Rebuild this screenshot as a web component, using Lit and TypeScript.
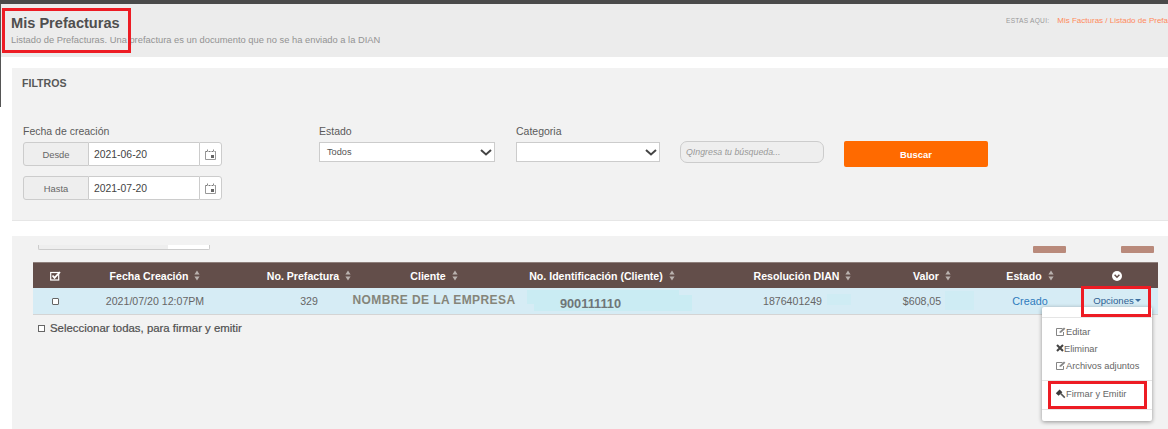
import { LitElement, html, css } from "lit";
import { customElement } from "lit/decorators.js";

const sortIcon = html`<svg class="sort" width="6" height="11" viewBox="0 0 6 11"><path d="M3 0.5 5.6 4.5H0.4Z M3 10.5 0.4 6.5H5.6Z" fill="#b9b1ae"/></svg>`;
const calIcon = html`<svg width="11" height="11" viewBox="0 0 11 11" fill="none" stroke="#777" stroke-width="1"><path d="M0.5 2.5V10.5H10.5V2.5" stroke="#999"/><path d="M0.5 2.5H10.5" stroke-dasharray="2 1"/><path d="M2.5 0.5V2M8.5 0.5V2" stroke="#888"/><rect x="6" y="6" width="3" height="3" fill="#666" stroke="none"/></svg>`;
const chevron = html`<svg width="12" height="7" viewBox="0 0 12 7" fill="none" stroke="#444" stroke-width="2"><path d="M1 1 6 5.5 11 1"/></svg>`;
const editIcon = html`<svg width="10" height="9" viewBox="0 0 10 9" fill="none" stroke="#777" stroke-width="0.9"><path d="M6.5 1.5H0.5V8.5H7.5V5"/><path d="M3.5 6 4 4.2 8 0.5 9.4 1.8 5.4 5.6Z" fill="#888" stroke="none"/></svg>`;
const delIcon = html`<svg width="8" height="8" viewBox="0 0 8 8" fill="none" stroke="#444" stroke-width="2.1"><path d="M1 1 7 7M7 1 1 7"/></svg>`;
const gavelIcon = html`<svg width="11" height="10" viewBox="0 0 11 10"><path d="M0.8 4.2 4.6 0.6 7.4 3.2 3.6 6.8Z" fill="#3a3a3a"/><path d="M5.8 4.6 9.8 8.6" stroke="#555" stroke-width="1.5" fill="none"/></svg>`;

@customElement("app-root")
export class AppRoot extends LitElement {
  static styles = css`
    :host { display: block; width: 1168px; height: 429px; overflow: hidden; position: relative; background: #fff; font-family: "Liberation Sans", Arial, sans-serif; color: #555; }
    .topbar { height: 4px; background: #4a4a4a; }
    .sliver { position: absolute; left: 0; top: 4px; width: 1px; height: 103px; background: #555; }
    .head { height: 53px; box-sizing: border-box; background: #ececec; padding: 11px 0 0 11px; display: flex; justify-content: space-between; }
    h1 { margin: 0; font-size: 14.6px; line-height: 17px; font-weight: 700; color: #4f4f4f; }
    .sub { margin-top: 2px; font-size: 9.35px; line-height: 12px; color: #939393; }
    .crumb { display: flex; white-space: nowrap; font-size: 8px; line-height: 10px; width: 162px; overflow: hidden; padding-top: 1px; flex: none; height: 12px; }
    .crumb b { font-size: 6.6px; font-weight: 400; color: #999; letter-spacing: 0.25px; margin-right: 8px; }
    .crumb span { color: #ff8a5c; }
    .filters { margin: 11px 0 0 12px; height: 153px; box-sizing: border-box; background: #f2f2f2; padding: 9px 0 0 10px; border-bottom: 1px solid #e6e6e6; }
    .ftitle { font-size: 10.6px; line-height: 12px; font-weight: 700; color: #585858; }
    .fgrid { margin: 36px 0 0 1px; display: grid; grid-template-columns: 296px 197px 164px 164px 144px; }
    .lab { font-size: 10.5px; line-height: 12px; color: #5a5a5a; height: 12px; margin-bottom: 5px; display: block; }
    .dg { display: flex; height: 24px; width: 199px; box-sizing: border-box; margin-bottom: 10px; }
    .dg .ad { width: 66px; box-sizing: border-box; background: #eee; border: 1px solid #ccc; border-radius: 3px 0 0 3px; font-size: 9.4px; color: #666; display: flex; align-items: center; justify-content: center; }
    .dg .in { width: 110px; box-sizing: border-box; background: #fff; border: 1px solid #ccc; border-left: 0; border-right: 0; font-size: 10.4px; color: #444; padding-left: 5px; display: flex; align-items: center; }
    .dg .ic { width: 23px; box-sizing: border-box; background: #fff; border: 1px solid #ccc; border-radius: 0 3px 3px 0; display: flex; align-items: center; justify-content: center; }
    .sel { box-sizing: border-box; height: 20px; background: #fff; border: 1px solid #ccc; display: flex; align-items: center; justify-content: space-between; font-size: 9.2px; color: #555; padding: 0 2px 0 7px; }
    .sel.a { width: 176px; } .sel.b { width: 144px; }
    .srch { box-sizing: border-box; width: 144px; height: 22px; background: #eee; border: 1px solid #ccc; border-radius: 7px; font-size: 8.8px; font-style: italic; color: #999; padding-left: 5px; display: flex; align-items: center; margin-top: 16px; }
    .btn { width: 144px; height: 26px; background: #ff6a00; color: #fff; font-size: 9.4px; font-weight: 700; border-radius: 2px; display: flex; align-items: center; justify-content: center; margin-top: 16px; }
    .list { margin: 15px 0 0 12px; height: 193px; background: #f2f2f2; padding: 9px 10px 0 21px; box-sizing: border-box; position: relative; }
    .tabs { display: flex; height: 5px; margin-left: 5px; justify-content: flex-start; position: relative; }
    .t1 { width: 130px; box-sizing: border-box; background: #eee; border: 1px solid #ccc; border-top: 0; border-right: 0; border-radius: 0 0 0 2px; }
    .t2 { width: 42px; box-sizing: border-box; background: #fff; border: 1px solid #ccc; border-top: 0; border-left: 0; border-radius: 0 0 2px 0; }
    .pill { position: absolute; top: 10px; width: 33px; height: 7px; background: #b98a7b; border-radius: 1px; }
    .p1 { left: 1021px; } .p2 { left: 1109px; }
    .grid { display: grid; grid-template-columns: 44px 187px 90px 160px 211px 155px 104px 92px 82px; }
    .hrow { margin-top: 12px; height: 26px; background: #634e4a; color: #fff; font-size: 10.6px; font-weight: 700; border-top: 1px solid #8e7f7b; box-sizing: border-box; }
    .hrow > div, .row > div { display: flex; align-items: center; justify-content: center; white-space: nowrap; gap: 6px; }
    .pr31 { padding-right: 31px; }
    .pr38 { padding-right: 38px; }
    .hrow .pr38 { padding-right: 35px; }
    .row { height: 27px; background: #d6ecf5; font-size: 10.6px; color: #666; border-bottom: 1px solid #d4d4d4; box-sizing: border-box; position: relative; }
    .cb { width: 7px; height: 7px; box-sizing: border-box; border: 1px solid #666; background: #fff; display: block; border-radius: 1px; }
    .smear { position: absolute; background: #caecf3; }
    .s1 { left: 494px; top: 2px; width: 152px; height: 14px; }
    .s1b { left: 501px; top: 7px; width: 158px; height: 16px; }
    .s2 { left: 794px; top: 6px; width: 24px; height: 11px; background: #cfecf4; }
    .s3 { left: 912px; top: 3px; width: 29px; height: 19px; background: #cfecf4; }
    .row > div > span { position: relative; }
    .name { font-size: 12px; font-weight: 700; color: #85857a; letter-spacing: 0.4px; margin-top: -3px; }
    .nit { font-size: 12.8px; font-weight: 700; color: #6f7678; margin-top: 5px; margin-right: 20px; }
    .shift { margin-right: 20px; }
    .link { color: #2f7bbd; font-size: 10.8px; }
    .opt { color: #2f5f92; font-size: 9.6px; gap: 1px !important; padding-bottom: 2px; box-sizing: border-box; }
    .caret { width: 0; height: 0; border: 3px solid transparent; border-top-color: #3b6da0; border-bottom: 0; margin-top: 1px; }
    .selall { margin: 7px 0 0 5px; font-size: 11.4px; font-weight: 400; color: #4f4f4f; display: flex; align-items: center; gap: 5px; line-height: 12px; -webkit-text-stroke: 0.2px #4f4f4f; }
    .selall i { width: 7px; height: 7px; box-sizing: border-box; border: 1px solid #666; display: block; background: #fff; }
    .menu { position: absolute; left: 1042px; top: 307px; width: 110px; height: 114px; box-sizing: border-box; background: #fff; border-radius: 2px; box-shadow: 0 1px 4px rgba(0,0,0,.4); font-size: 9.3px; color: #666; padding-top: 10px; }
    .mline { height: 1px; background: #e5e5e5; }
    .mi { display: flex; align-items: center; height: 17px; padding-left: 14px; gap: 0; white-space: nowrap; }
    .mi svg { margin-top: -1px; }
    .m0 { margin-top: 5px; }
    .m3 { margin-top: 6px; }
    .m4 { height: 28px; padding-bottom: 2px; box-sizing: border-box; padding-left: 13px; }
    .red { position: absolute; border: 3px solid #ed1c24; box-sizing: border-box; pointer-events: none; }
    .r1 { left: 2px; top: 8px; width: 129px; height: 45px; }
    .r2 { left: 1081px; top: 286px; width: 70px; height: 31px; }
    .r3 { left: 1048px; top: 381px; width: 99px; height: 28px; }
  `;

  render() {
    const h = (t: string) => html`<span>${t}</span>${sortIcon}`;
    return html`
      <div class="topbar"></div>
      <div class="sliver"></div>
      <header class="head">
        <div>
          <h1>Mis Prefacturas</h1>
          <div class="sub">Listado de Prefacturas. Una prefactura es un documento que no se ha enviado a la DIAN</div>
        </div>
        <div class="crumb"><b>ESTAS AQUI:</b><span>Mis Facturas / Listado de Prefa</span></div>
      </header>
      <section class="filters">
        <div class="ftitle">FILTROS</div>
        <div class="fgrid">
          <div>
            <span class="lab">Fecha de creación</span>
            <div class="dg"><div class="ad">Desde</div><div class="in">2021-06-20</div><div class="ic">${calIcon}</div></div>
            <div class="dg"><div class="ad">Hasta</div><div class="in">2021-07-20</div><div class="ic">${calIcon}</div></div>
          </div>
          <div><span class="lab">Estado</span><div class="sel a"><span>Todos</span>${chevron}</div></div>
          <div><span class="lab">Categoria</span><div class="sel b"><span></span>${chevron}</div></div>
          <div><div class="srch">QIngresa tu búsqueda...</div></div>
          <div><div class="btn">Buscar</div></div>
        </div>
      </section>
      <section class="list">
        <div class="tabs"><div class="t1"></div><div class="t2"></div></div>
        <div class="pill p1"></div><div class="pill p2"></div>
        <div class="grid hrow">
          <div><svg width="11" height="10" viewBox="0 0 11 10" fill="none" stroke="#fff"><rect x="0.7" y="1.5" width="8" height="7.5" stroke-width="1.2"/><path d="M2.5 4.5 4.5 6.8 10 1" stroke-width="1.8"/></svg></div>
          <div class="pr31">${h("Fecha Creación")}</div>
          <div>${h("No. Prefactura")}</div>
          <div>${h("Cliente")}</div>
          <div class="pr38">${h("No. Identificación (Cliente)")}</div>
          <div>${h("Resolución DIAN")}</div>
          <div>${h("Valor")}</div>
          <div>${h("Estado")}</div>
          <div><svg width="10" height="10" viewBox="0 0 10 10"><circle cx="5" cy="5" r="5" fill="#fff"/><path d="M2.6 3.8 5 6.2 7.4 3.8" fill="none" stroke="#634e4a" stroke-width="1.5"/></svg></div>
        </div>
        <div class="grid row">
          <div class="smear s1"></div><div class="smear s1b"></div><div class="smear s2"></div><div class="smear s3"></div>
          <div><i class="cb"></i></div>
          <div class="pr31"><span>2021/07/20 12:07PM</span></div>
          <div><span>329</span></div>
          <div><span class="name">NOMBRE DE LA EMPRESA</span></div>
          <div class="pr38"><span class="nit">900111110</span></div>
          <div><span class="shift">1876401249</span></div>
          <div><span class="shift">$608,05</span></div>
          <div><span class="link">Creado</span></div>
          <div class="opt"><span>Opciones</span><i class="caret"></i></div>
        </div>
        <div class="selall"><i></i><span>Seleccionar todas, para firmar y emitir</span></div>
      </section>
      <nav class="menu">
        <div class="mline"></div>
        <div class="mi m0">${editIcon}<span>Editar</span></div>
        <div class="mi">${delIcon}<span>Eliminar</span></div>
        <div class="mi">${editIcon}<span>Archivos adjuntos</span></div>
        <div class="mline m3"></div>
        <div class="mi m4">${gavelIcon}<span>Firmar y Emitir</span></div>
        <div class="mline"></div>
      </nav>
      <div class="red r1"></div>
      <div class="red r2"></div>
      <div class="red r3"></div>
    `;
  }
}
